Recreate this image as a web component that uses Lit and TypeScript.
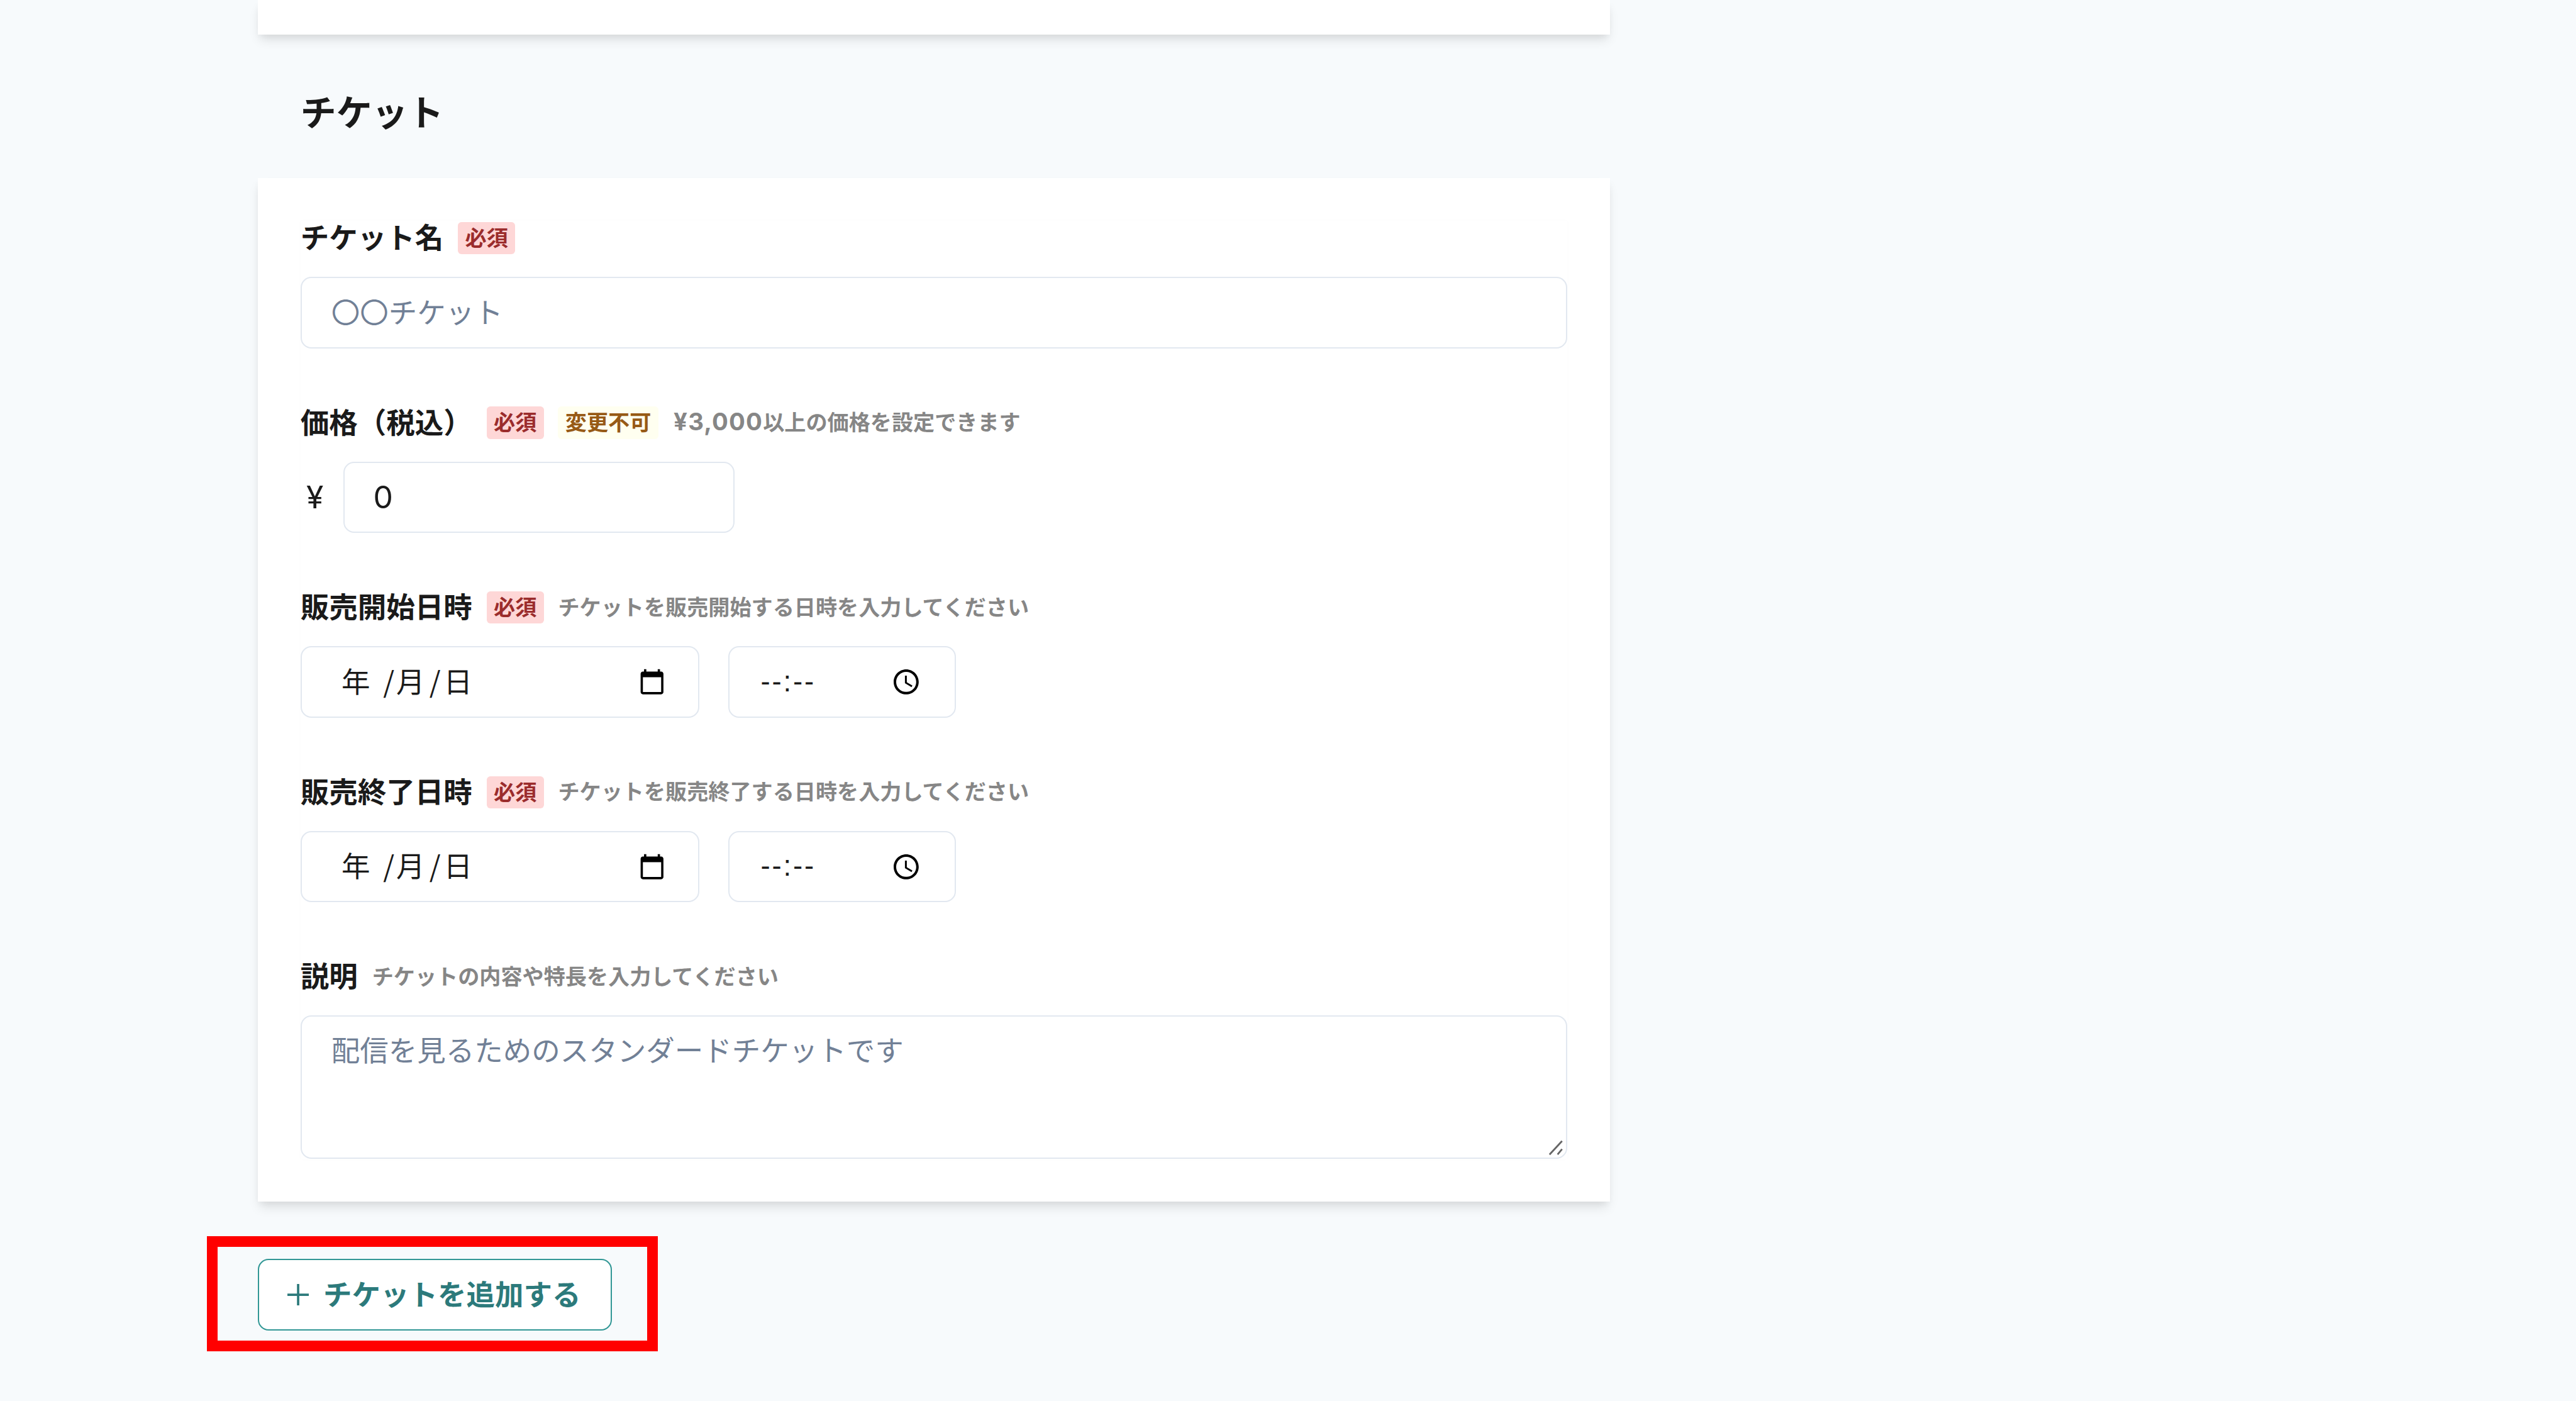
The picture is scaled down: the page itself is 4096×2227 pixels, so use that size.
import { LitElement, html, css, svg } from "lit";
import { customElement } from "lit/decorators.js";

const calendarIcon = svg`<path d="M20 3h-1V1h-2v2H7V1H5v2H4c-1.1 0-2 .9-2 2v16c0 1.1.9 2 2 2h16c1.1 0 2-.9 2-2V5c0-1.1-.9-2-2-2zm0 18H4V8h16v13z"/>`;
const clockIcon = svg`<path d="M11.99 2C6.47 2 2 6.48 2 12s4.47 10 9.99 10C17.52 22 22 17.52 22 12S17.52 2 11.99 2zM12 20c-4.42 0-8-3.58-8-8s3.58-8 8-8 8 3.58 8 8-3.58 8-8 8z"/><path d="M12.5 7H11v6l5.25 3.15.75-1.23-4.5-2.67z"/>`;

@customElement("app-root")
export class AppRoot extends LitElement {
  static styles = css`
    :host {
      display: block;
      zoom: 2.84444;
      min-height: 783px;
      background: #f7fafc;
      color: #1a1a1a;
      font-family: "Noto Sans CJK JP", "Noto Sans", sans-serif;
      font-size: 16px;
      overflow: hidden;
    }
    .main { width: 756px; margin-left: 144px; }
    .card { background: #fff; box-shadow: 0 4px 6px -1px rgba(0,0,0,.1), 0 2px 4px -1px rgba(0,0,0,.06); }
    .top-card { height: 19.5px; }
    h2 { margin: 0; padding: 27.4px 24px 22.6px; font-size: 20px; line-height: 30px; font-weight: 700; }
    .form-card { padding: 24px; }
    .form { box-shadow: 0 0 3px rgba(0,0,0,.015); }
    .field + .field { margin-top: 32px; }
    .label-row { display: flex; align-items: center; gap: 8px; height: 19.2px; margin-bottom: 12px; white-space: nowrap; }
    .label { font-weight: 700; font-size: 16px; line-height: 19.2px; padding-bottom: 2px; }
    .badge { font-size: 12px; font-weight: 700; line-height: 16.7px; padding: 0 4px 1.3px; border-radius: 2px; }
    .req { background: #fed7d7; color: #9b2c2c; }
    .fixed { background: #fffff0; color: #975a16; }
    .help { font-size: 12px; font-weight: 700; line-height: 18px; padding-bottom: 1.6px; color: #868686; }
    .num { font-family: Inter, "Noto Sans", sans-serif; font-size: 13.5px; letter-spacing: .4px; margin-left: .6px; }
    .input {
      box-sizing: border-box; height: 40px; padding: 0 16px 2px;
      border: 1px solid #e2e8f0; border-radius: 6px; background: #fff;
      display: flex; align-items: center; white-space: nowrap; line-height: 22px;
    }
    .ph { color: #718096; margin-left: .5px; }
    .price-row { display: flex; align-items: center; gap: 8px; }
    .yen { width: 16px; text-align: center; font: 400 17.5px Inter, sans-serif; }
    .price { width: 218.5px; padding-bottom: 0; font: 400 17.5px Inter, sans-serif; }
    .dt-row { display: flex; gap: 16px; }
    .date { width: 223px; justify-content: space-between; padding: 0 18.3px 2px 22.2px; }
    .time { width: 127.5px; justify-content: space-between; padding: 0 18.7px 0 17.5px; }
    .date-text { display: flex; }
    .slash { width: 6px; text-align: center; margin: 0 1.3px 0 7.3px; }
    .slash.second { margin: 0 2px 0 2.5px; }
    .time-text { font-family: "Liberation Sans", sans-serif; letter-spacing: 1px; }
    svg.picker { fill: #000; display: block; flex: none; }
    .date svg.picker { margin-top: 2px; }
    .cal { width: 15.3px; height: 15.3px; }
    .clk { width: 16.8px; height: 16.8px; }
    .textarea { position: relative; height: 80px; padding: 7px 16px; align-items: flex-start; }
    .grip { position: absolute; right: 1px; bottom: 1px; width: 9px; height: 9px; stroke: #666; stroke-width: 1; fill: none; display: block; }
    .add-wrap { position: relative; display: inline-block; margin-top: 32px; vertical-align: top; }
    .add {
      box-sizing: border-box; display: flex; align-items: center; height: 40px; width: 198px; padding: 0 16px 2px;
      background: #fff; border: 1px solid #319795; border-radius: 6px;
      color: #2c7a7b; font: 700 16px "Noto Sans CJK JP", sans-serif; white-space: nowrap;
    }
    .add svg { width: 12px; height: 12px; margin: 2px 8px 0 0; stroke: #2c7a7b; stroke-width: 1.3; display: block; flex: none; }
    .mark { position: absolute; left: -28.4px; right: -25.7px; top: -12.5px; bottom: -11.7px; border: 6px solid #f00; pointer-events: none; }
  `;

  private req() { return html`<span class="badge req">必須</span>`; }

  private dateTime(label: string, help: string) {
    return html`<div class="field">
      <div class="label-row"><span class="label">${label}</span>${this.req()}<span class="help">${help}</span></div>
      <div class="dt-row">
        <div class="input date">
          <span class="date-text"><span>年</span><span class="slash">/</span><span>月</span><span class="slash second">/</span><span>日</span></span>
          <svg class="picker cal" viewBox="0 0 24 24">${calendarIcon}</svg>
        </div>
        <div class="input time">
          <span class="time-text">--:--</span>
          <svg class="picker clk" viewBox="0 0 24 24">${clockIcon}</svg>
        </div>
      </div>
    </div>`;
  }

  render() {
    return html`<div class="main">
      <div class="card top-card"></div>
      <h2>チケット</h2>
      <div class="card form-card">
        <div class="form">
          <div class="field">
            <div class="label-row"><span class="label">チケット名</span>${this.req()}</div>
            <div class="input"><span class="ph">〇〇チケット</span></div>
          </div>
          <div class="field">
            <div class="label-row">
              <span class="label">価格（税込）</span>${this.req()}
              <span class="badge fixed">変更不可</span>
              <span class="help"><span class="num">¥3,000</span>以上の価格を設定できます</span>
            </div>
            <div class="price-row"><span class="yen">¥</span><div class="input price">0</div></div>
          </div>
          ${this.dateTime("販売開始日時", "チケットを販売開始する日時を入力してください")}
          ${this.dateTime("販売終了日時", "チケットを販売終了する日時を入力してください")}
          <div class="field">
            <div class="label-row"><span class="label">説明</span><span class="help">チケットの内容や特長を入力してください</span></div>
            <div class="input textarea">
              <span class="ph">配信を見るためのスタンダードチケットです</span>
              <svg class="grip" viewBox="0 0 9 9"><path d="M1 8.5L8 1M5.5 8.5L8 5.5"/></svg>
            </div>
          </div>
        </div>
      </div>
      <div class="add-wrap">
        <button class="add" type="button">
          <svg viewBox="0 0 12 12"><path d="M6 0v12M0 6h12"/></svg>チケットを追加する
        </button>
        <div class="mark"></div>
      </div>
    </div>`;
  }
}
